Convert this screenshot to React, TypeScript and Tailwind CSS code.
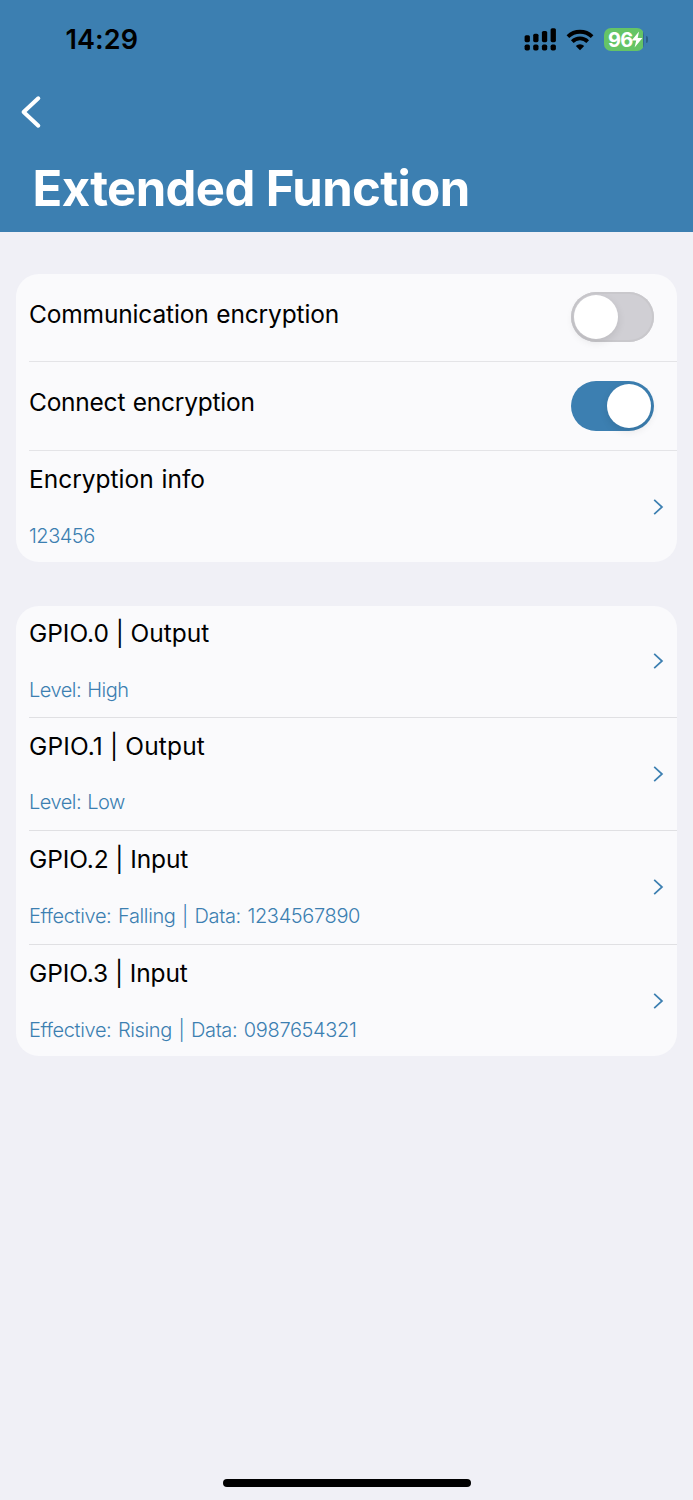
type ToggleRow = { label: string; on: boolean; labelClass: string };

type LinkRow = {
  label: string;
  detail: string;
  labelClass: string;
  detailClass: string;
};

const toggles: ToggleRow[] = [
  { label: "Communication encryption", on: false, labelClass: "tracking-[-0.15px] [word-spacing:1px]" },
  { label: "Connect encryption", on: true, labelClass: "tracking-[-0.24px] [word-spacing:1px]" },
];

const pins: LinkRow[] = [
  {
    label: "GPIO.0 | Output",
    detail: "Level: High",
    labelClass: "tracking-[-0.04px]",
    detailClass: "tracking-[-0.5px] [word-spacing:1px]",
  },
  {
    label: "GPIO.1 | Output",
    detail: "Level: Low",
    labelClass: "tracking-[0.15px]",
    detailClass: "tracking-[-0.5px] [word-spacing:1px]",
  },
  {
    label: "GPIO.2 | Input",
    detail: "Effective: Falling | Data: 1234567890",
    labelClass: "tracking-[-0.1px]",
    detailClass: "tracking-[-0.36px] [word-spacing:1.3px]",
  },
  {
    label: "GPIO.3 | Input",
    detail: "Effective: Rising | Data: 0987654321",
    labelClass: "tracking-[-0.1px]",
    detailClass: "tracking-[-0.36px] [word-spacing:1.3px]",
  },
];

function SignalIcon() {
  return (
    <svg width="33" height="24" viewBox="0 0 33 24" fill="#000">
      <rect x="1.6" y="7.2" width="5.3" height="7" rx="1.6" />
      <rect x="10.2" y="5.7" width="5.3" height="8.5" rx="1.6" />
      <rect x="18.9" y="3" width="5.3" height="11.2" rx="1.6" />
      <rect x="27.6" y="0.2" width="5.3" height="14" rx="1.6" />
      <rect x="1.6" y="16.4" width="5.3" height="6.2" rx="1.8" />
      <rect x="10.2" y="16.4" width="5.3" height="6.2" rx="1.8" />
      <rect x="18.9" y="16.4" width="5.3" height="6.2" rx="1.8" />
      <rect x="27.6" y="16.4" width="5.3" height="6.2" rx="1.8" />
    </svg>
  );
}

function WifiIcon() {
  return (
    <svg width="28" height="22" viewBox="0 0 28 22" fill="none" stroke="#000" strokeWidth="3.8">
      <path d="M1.9 7.7a17.3 17.3 0 0 1 24.2 0" />
      <path d="M6.3 12.6a11 11 0 0 1 15.4 0" />
      <path d="M14 21.2l-4.2-4.3a5.9 5.9 0 0 1 8.4 0z" fill="#000" stroke="none" />
    </svg>
  );
}

function Battery() {
  return (
    <div className="flex items-center">
      <div className="flex h-[22.5px] w-[40px] items-center rounded-[7px] bg-[linear-gradient(90deg,#65c466_0_39px,#33698f_39px)] pl-[4px]">
        <span className="text-[20px] leading-none font-bold tracking-[-0.8px] text-white">96</span>
        <svg width="12" height="17" viewBox="0 0 12 17" fill="#fff" className="-ml-px">
          <path d="M8 0.4L0.6 9.5h4.6L3.6 16.6l7.8-9.6H6.7z" />
        </svg>
      </div>
      <div className="ml-[1.5px] h-[7px] w-[2.5px] rounded-r-full bg-[#2c5f86]" />
    </div>
  );
}

function Toggle({ on }: { on: boolean }) {
  return (
    <div
      className={`flex h-[50px] w-[83px] items-center rounded-full ${
        on
          ? "justify-end bg-[#3c7fb1] pr-[3px]"
          : "justify-start bg-[#d0cfd4] pl-[3px] ring-[2px] ring-[#c9c8cc] ring-inset"
      }`}
    >
      <div className="size-[44px] rounded-full bg-white shadow-[0_3px_8px_rgba(0,0,0,0.1)]" />
    </div>
  );
}

function Chevron() {
  return (
    <svg width="12" height="16" viewBox="0 0 12 16" fill="none" stroke="#3c7fb1" strokeWidth="1.7">
      <path d="M1.2 0.9L9 8L1.2 15.1" />
    </svg>
  );
}

function InfoRow({ label, detail, labelClass, detailClass }: LinkRow) {
  return (
    <div className="flex h-full items-center justify-between pr-[12px]">
      <div className="mb-[1.5px] flex flex-col gap-[28.5px]">
        <span className={`text-[24.5px] leading-[30px] whitespace-pre text-black ${labelClass}`}>{label}</span>
        <span className={`text-[20px] leading-[26px] font-light whitespace-pre text-[#3c7fb1] ${detailClass}`}>
          {detail}
        </span>
      </div>
      <Chevron />
    </div>
  );
}

export default function App() {
  return (
    <div className="flex h-[1500px] w-[693px] flex-col bg-[#f0f0f6] font-[Inter,sans-serif]">
      <header className="flex h-[232px] flex-col bg-[#3c7fb1]">
        <div className="flex h-[79px] items-center justify-between pr-[45px] pl-[65.5px]">
          <span className="text-[27px] leading-none font-semibold tracking-[0.1px] text-black">14:29</span>
          <div className="flex items-center gap-[10px]">
            <SignalIcon />
            <WifiIcon />
            <Battery />
          </div>
        </div>
        <div className="flex h-[66px] items-center pl-[19.5px]">
          <svg width="22" height="34" viewBox="0 0 22 34" fill="none" stroke="#fff" strokeWidth="4" strokeLinecap="round" strokeLinejoin="round">
            <path d="M18.3 3.3L3.6 17L18.3 30.7" />
          </svg>
        </div>
        <h1 className="mt-[14px] pl-[32.5px] text-[49px] leading-[60px] font-bold tracking-[-0.6px] whitespace-nowrap text-white">
          Extended Function
        </h1>
      </header>

      <main className="flex flex-1 flex-col gap-[44px] px-4 pt-[42px]">
        <section className="h-[288px] rounded-[23px] bg-[#fafafc] pl-[13px]">
          {toggles.map((t, i) => (
            <div
              key={t.label}
              className={`flex items-center justify-between border-b border-[#e4e4e7] pr-[23px] ${i === 0 ? "h-[87.5px]" : "h-[89px]"}`}
            >
              <span className={`mb-[7px] text-[24.5px] leading-[30px] text-black ${t.labelClass}`}>{t.label}</span>
              <Toggle on={t.on} />
            </div>
          ))}
          <div className="h-[113.5px]">
            <InfoRow
              label="Encryption info"
              detail="123456"
              labelClass="tracking-normal [word-spacing:1px]"
              detailClass="tracking-[-0.5px]"
            />
          </div>
        </section>

        <section className="h-[450px] rounded-[23px] bg-[#fafafc] pl-[13px]">
          {pins.map((pin, i) => (
            <div
              key={pin.label}
              className={`${i === 0 ? "h-[111.8px]" : "h-[113.4px]"} ${i < pins.length - 1 ? "border-b border-[#e0e0e3]" : ""}`}
            >
              <InfoRow {...pin} />
            </div>
          ))}
        </section>
      </main>

      <div className="mx-auto mb-[13.5px] h-[8px] w-[248px] rounded-full bg-black" />
    </div>
  );
}
